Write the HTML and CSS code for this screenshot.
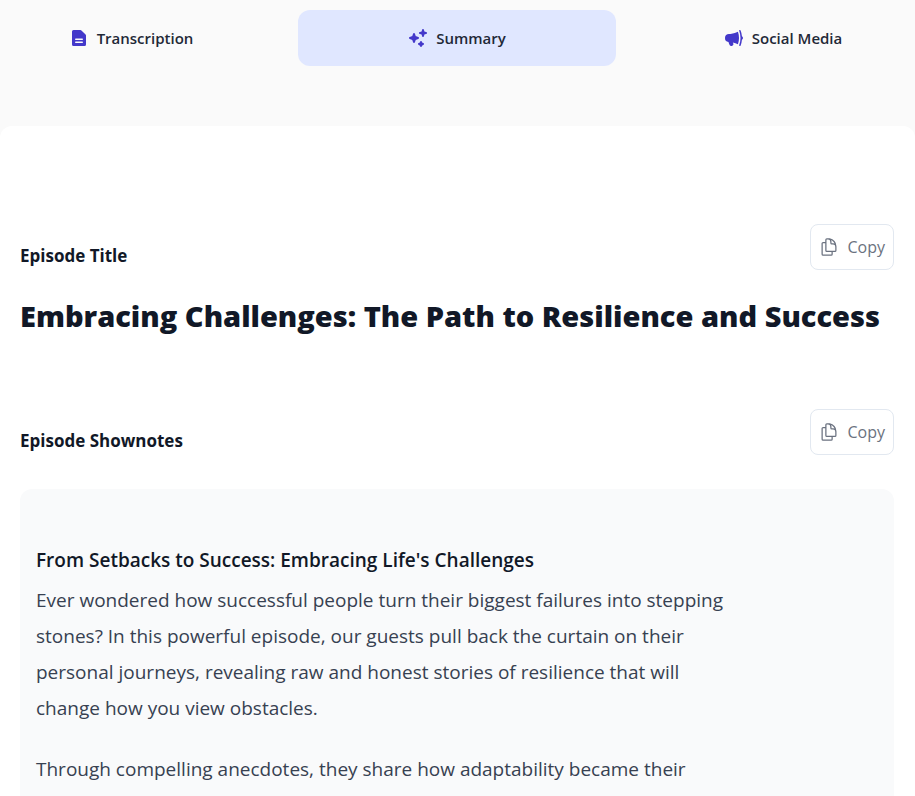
FILE: index.html
```html
<!DOCTYPE html>
<html lang="en">
<head>
  <meta charset="UTF-8">
  <meta name="viewport" content="width=device-width, initial-scale=1.0">
  <title>Episode Summary</title>
  <link rel="stylesheet" href="styles.css">
</head>
<body>

  <!-- Tabs -->
  <nav class="tabs">
    <button type="button" class="tab">
      <svg class="tab-icon" viewBox="0 0 20 20" aria-hidden="true"><path fill-rule="evenodd" d="M4.5 2A1.5 1.5 0 0 0 3 3.5v13A1.5 1.5 0 0 0 4.5 18h11a1.5 1.5 0 0 0 1.5-1.5V7.621a1.5 1.5 0 0 0-.44-1.06l-4.12-4.122A1.5 1.5 0 0 0 11.378 2H4.5Zm2.25 8.5a.75.75 0 0 0 0 1.5h6.5a.75.75 0 0 0 0-1.5h-6.5Zm0 3a.75.75 0 0 0 0 1.5h6.5a.75.75 0 0 0 0-1.5h-6.5Z"/></svg>
      Transcription
    </button>
    <button type="button" class="tab active">
      <svg class="tab-icon" viewBox="0 0 20 20" aria-hidden="true"><path d="M15.98 1.804a1 1 0 0 0-1.96 0l-.24 1.192a1 1 0 0 1-.784.785l-1.192.238a1 1 0 0 0 0 1.962l1.192.238a1 1 0 0 1 .785.785l.238 1.192a1 1 0 0 0 1.962 0l.238-1.192a1 1 0 0 1 .785-.785l1.192-.238a1 1 0 0 0 0-1.962l-1.192-.238a1 1 0 0 1-.785-.785l-.238-1.192ZM6.949 5.684a1 1 0 0 0-1.898 0l-.683 2.051a1 1 0 0 1-.633.633l-2.051.683a1 1 0 0 0 0 1.898l2.051.684a1 1 0 0 1 .633.632l.683 2.051a1 1 0 0 0 1.898 0l.683-2.051a1 1 0 0 1 .633-.633l2.051-.683a1 1 0 0 0 0-1.898l-2.051-.683a1 1 0 0 1-.633-.633L6.95 5.684ZM13.949 13.684a1 1 0 0 0-1.898 0l-.184.551a1 1 0 0 1-.632.633l-.551.183a1 1 0 0 0 0 1.898l.551.183a1 1 0 0 1 .633.633l.183.551a1 1 0 0 0 1.898 0l.184-.551a1 1 0 0 1 .632-.633l.551-.183a1 1 0 0 0 0-1.898l-.551-.184a1 1 0 0 1-.633-.632l-.183-.551Z"/></svg>
      Summary
    </button>
    <button type="button" class="tab">
      <svg class="tab-icon" viewBox="0 0 20 20" aria-hidden="true"><path d="M13.92 3.845a19.362 19.362 0 0 1-6.3 1.98C6.765 5.942 5.89 6 5 6a4 4 0 0 0-.504 7.969 15.97 15.97 0 0 0 1.271 3.34c.397.771 1.342 1 2.05.59l.867-.5c.726-.419.94-1.32.588-2.02-.166-.331-.315-.666-.448-1.004 1.8.357 3.511.963 5.096 1.78A17.964 17.964 0 0 0 15 10c0-2.162-.381-4.235-1.08-6.155ZM15.243 3.097A19.456 19.456 0 0 1 16.5 10c0 2.43-.445 4.758-1.257 6.904l-.03.077a.75.75 0 0 0 1.401.537 20.903 20.903 0 0 0 1.312-5.745 2 2 0 0 0 0-3.546 20.902 20.902 0 0 0-1.312-5.745.75.75 0 0 0-1.4.537l.029.078Z"/></svg>
      Social Media
    </button>
  </nav>

  <!-- Summary panel -->
  <main class="panel">
    <section class="block">
      <div class="block-header">
        <h2 class="label">Episode Title</h2>
        <button type="button" class="copy">
          <svg class="copy-icon" viewBox="0 0 24 24" aria-hidden="true"><path d="M15.75 17.25v3.375c0 .621-.504 1.125-1.125 1.125h-9.75a1.125 1.125 0 0 1-1.125-1.125V7.875c0-.621.504-1.125 1.125-1.125H6.75a9.06 9.06 0 0 1 1.5.124m7.5 10.376h3.375c.621 0 1.125-.504 1.125-1.125V11.25c0-4.46-3.243-8.161-7.5-8.876a9.06 9.06 0 0 0-1.5-.124H9.375c-.621 0-1.125.504-1.125 1.125v3.5m7.5 10.375H9.375a1.125 1.125 0 0 1-1.125-1.125v-9.25m12 6.625v-1.875a3.375 3.375 0 0 0-3.375-3.375h-1.5a1.125 1.125 0 0 1-1.125-1.125v-1.5a3.375 3.375 0 0 0-3.375-3.375H9.75"/></svg>
          Copy
        </button>
      </div>
      <h1 class="episode-title">Embracing Challenges: The Path to Resilience and Success</h1>
    </section>

    <section class="block">
      <div class="block-header">
        <h2 class="label">Episode Shownotes</h2>
        <button type="button" class="copy">
          <svg class="copy-icon" viewBox="0 0 24 24" aria-hidden="true"><path d="M15.75 17.25v3.375c0 .621-.504 1.125-1.125 1.125h-9.75a1.125 1.125 0 0 1-1.125-1.125V7.875c0-.621.504-1.125 1.125-1.125H6.75a9.06 9.06 0 0 1 1.5.124m7.5 10.376h3.375c.621 0 1.125-.504 1.125-1.125V11.25c0-4.46-3.243-8.161-7.5-8.876a9.06 9.06 0 0 0-1.5-.124H9.375c-.621 0-1.125.504-1.125 1.125v3.5m7.5 10.375H9.375a1.125 1.125 0 0 1-1.125-1.125v-9.25m12 6.625v-1.875a3.375 3.375 0 0 0-3.375-3.375h-1.5a1.125 1.125 0 0 1-1.125-1.125v-1.5a3.375 3.375 0 0 0-3.375-3.375H9.75"/></svg>
          Copy
        </button>
      </div>
      <div class="shownotes">
        <article class="prose">
          <h3>From Setbacks to Success: Embracing Life's Challenges</h3>
          <p>Ever wondered how successful people turn their biggest failures into stepping stones? In this powerful episode, our guests pull back the curtain on their personal journeys, revealing raw and honest stories of resilience that will change how you view obstacles.</p>
          <p>Through compelling anecdotes, they share how adaptability became their</p>
        </article>
      </div>
    </section>
  </main>

</body>
</html>
```
FILE: styles.css
```css
* {
  box-sizing: border-box;
}

body {
  margin: 0;
  height: 100vh;
  overflow: hidden;
  background: #fafafa;
  color: #111827;
  font-family: "Segoe UI", "Open Sans", "Noto Sans", sans-serif;
}

h1, h2, h3, p {
  margin: 0;
}

button {
  font-family: inherit;
  cursor: pointer;
}

.tabs {
  display: grid;
  grid-template-columns: repeat(3, 1fr);
  gap: 8px;
  margin: 0 -27px 0 -28px;
  padding: 10px 0 60px;
}

.tab {
  display: flex;
  align-items: center;
  justify-content: center;
  gap: 8px;
  height: 56px;
  border: 0;
  border-radius: 12px;
  background: transparent;
  color: #1f2937;
  font-size: 15px;
  font-weight: 600;
}

.tab.active {
  background: #e0e7ff;
}

.tab-icon {
  width: 20px;
  height: 20px;
  fill: #4338ca;
}

.panel {
  padding: 98px 21px 0 20px;
  border-radius: 12px;
  background: #fff;
}

.block {
  margin-bottom: 73px;
}

.block:last-child {
  margin-bottom: 0;
}

.block-header {
  display: flex;
  justify-content: space-between;
  align-items: flex-end;
}

.label {
  font-size: 17px;
  line-height: 28px;
  font-weight: 700;
}

.copy {
  display: flex;
  align-items: center;
  gap: 8px;
  height: 46px;
  padding: 0 8px;
  border: 1px solid #e2e8f0;
  border-radius: 8px;
  background: #fff;
  color: #6b7280;
  font-size: 16px;
}

.copy-icon {
  width: 20px;
  height: 20px;
  fill: none;
  stroke: currentColor;
  stroke-width: 1.5;
  stroke-linecap: round;
  stroke-linejoin: round;
}

.episode-title {
  margin-top: 26px;
  font-size: 29px;
  line-height: 40px;
  font-weight: 800;
}

.shownotes {
  margin-top: 34px;
  padding: 56px 16px;
  border-radius: 12px;
  background: #f9fafb;
}

.prose {
  max-width: 700px;
  color: #374151;
  font-size: 19px;
  line-height: 36px;
}

.prose h3 {
  margin-bottom: 7px;
  color: #111827;
  font-size: 19px;
  line-height: 30px;
  font-weight: 600;
}

.prose p {
  margin-bottom: 25px;
}
```
